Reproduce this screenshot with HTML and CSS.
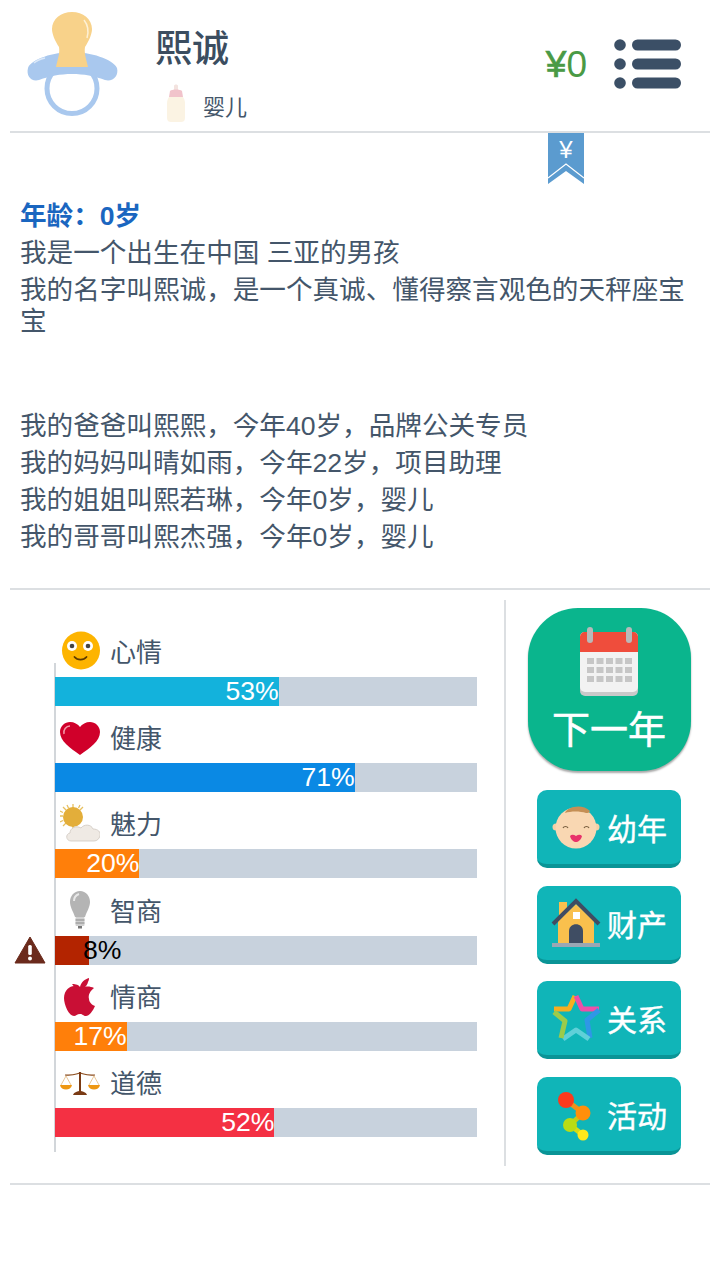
FILE: index.html
```html
<!DOCTYPE html>
<html lang="zh-CN">
<head>
  <meta charset="UTF-8">
  <meta name="viewport" content="width=device-width, initial-scale=1.0">
  <title>熙诚</title>
  <link rel="stylesheet" href="styles.css">
</head>
<body>
  <header class="top">
    <svg class="avatar" viewBox="0 0 120 120">
      <circle cx="63" cy="82.500" r="25" fill="none" stroke="#a9c8ee" stroke-width="5"/>
      <path d="M19 62C22 53 45 46 63 46S104 53 108 62C110 70 104 76 96 74 85 70 75 68 63 68S41 70 30 74C22 76 17 70 19 62z" fill="#a9c8ee"/>
      <path d="M25 57c3-3 7-4 11-5" stroke="#dbe8f8" stroke-width="1.500" fill="none"/>
      <path d="M47 61c2-9 4-14 3-20-4-6-7-13-7-18 0-10 9-17 20-17s20 7 20 17c0 5-3 12-7 18-1 6 1 11 3 20z" fill="#f8d28a"/>
      <path d="M75 14c4 5 5 11 3 18" stroke="#fdf0d5" stroke-width="1.500" fill="none"/>
    </svg>
    <div class="who">
      <div class="name">熙诚</div>
      <div class="stage">
        <svg class="bottle" viewBox="0 0 20 40">
          <path d="M8 3c0-2 4-2 4 0v4H8z" fill="#f3e3df"/>
          <path d="M4 8c2-2 10-2 12 0l1 6H3z" fill="#f1c3cb"/>
          <path d="M3 14h14c2 3 2 5 2 8v13c0 3-2 4-4 4H5c-2 0-4-1-4-4V22c0-3 0-5 2-8z" fill="#fbf3e3"/>
        </svg>
        <span>婴儿</span>
      </div>
    </div>
    <div class="money"><span class="yen">¥</span>0</div>
    <svg class="menu" viewBox="0 0 68 50">
      <circle cx="6" cy="6" r="5.800"/><circle cx="6" cy="25" r="5.800"/><circle cx="6" cy="44" r="5.800"/>
      <rect x="18" y="0.500" width="49" height="11" rx="5.500"/><rect x="18" y="19.500" width="49" height="11" rx="5.500"/><rect x="18" y="38.500" width="49" height="11" rx="5.500"/>
    </svg>
  </header>

  <section class="story">
    <div class="ribbon">
      <svg viewBox="0 0 36 51">
        <path d="M0 0h36v51L18 38 0 51z" fill="#5b9bcf"/>
        <path d="M0 45l18-14 18 14" fill="none" stroke="#fff" stroke-width="1.200"/>
        <text x="18" y="25" text-anchor="middle" class="ribbon-yen">¥</text>
      </svg>
    </div>
    <p class="age">年龄：0岁</p>
    <p>我是一个出生在中国 三亚的男孩</p>
    <p>我的名字叫熙诚，是一个真诚、懂得察言观色的天秤座宝宝</p>
    <div class="gap"></div>
    <p>我的爸爸叫熙熙，今年40岁，品牌公关专员</p>
    <p>我的妈妈叫晴如雨，今年22岁，项目助理</p>
    <p>我的姐姐叫熙若琳，今年0岁，婴儿</p>
    <p>我的哥哥叫熙杰强，今年0岁，婴儿</p>
  </section>

  <section class="panel">
    <div class="stats">
      <div class="stat">
        <div class="stat-label">
          <svg class="stat-icon" viewBox="-1.500 0 40 40">
            <circle cx="19.500" cy="19.500" r="19" fill="#fdb400"/>
            <circle cx="10.500" cy="15" r="5" fill="#fff"/><circle cx="26.500" cy="15" r="5" fill="#fff"/>
            <circle cx="10.500" cy="15" r="2.300" fill="#444"/><circle cx="26.500" cy="15" r="2.300" fill="#444"/>
            <path d="M13 26c3 3.500 9 3.500 12 0" fill="none" stroke="#5b3a00" stroke-width="1.800" stroke-linecap="round"/>
          </svg>
          <span>心情</span>
        </div>
        <div class="track"><div class="fill" style="width:53%;background:#13b2dc">53%</div></div>
      </div>
      <div class="stat">
        <div class="stat-label">
          <svg class="stat-icon" viewBox="0 -5 40 40">
            <path d="M20 33C10 26 0 19 0 10 0 4 5 0 10 0c4 0 8 2 10 5 2-3 6-5 10-5 5 0 10 4 10 10 0 9-10 16-20 23z" fill="#d0002a"/>
            <path d="M4 12c-1-4 2-8 6-8" fill="none" stroke="#f59aa8" stroke-width="1.500"/>
          </svg>
          <span>健康</span>
        </div>
        <div class="track"><div class="fill" style="width:71%;background:#0a89e4">71%</div></div>
      </div>
      <div class="stat">
        <div class="stat-label">
          <svg class="stat-icon" viewBox="0 0 40 40">
            <g stroke="#e6c060" stroke-width="1.300">
              <path d="M13 0v4M13 22v4M0 12h3M3 3l3 3M23 3l-3 3M3 22l3-3M7 1l1.500 3M20 1l-1.500 3M0 7l3 1.500M0 18l3-1.500"/>
            </g>
            <circle cx="13" cy="13" r="10" fill="#e3ae3a"/>
            <path d="M11 37c-5 0-6-7-1-8 0-5 6-8 11-5 3-4 10-4 12 1 5 0 8 3 7 7-1 3-3 5-6 5z" fill="#efeae4" stroke="#cfc8c0" stroke-width="0.800"/>
          </svg>
          <span>魅力</span>
        </div>
        <div class="track"><div class="fill" style="width:20%;background:#ff7f0a">20%</div></div>
      </div>
      <div class="stat">
        <div class="stat-label">
          <svg class="stat-icon" viewBox="0 0 40 38">
            <path d="M20 0c6 0 10 5 10 11 0 5-3 9-5 15H15c-2-6-5-10-5-15C10 5 14 0 20 0z" fill="#b4b4b4"/>
            <path d="M14 10c0-3 2-6 5-7" stroke="#e8e8e8" stroke-width="2" fill="none"/>
            <rect x="15.500" y="26" width="9" height="9" rx="1" fill="#d0d0d0"/>
            <path d="M15.500 29h9M15.500 32h9" stroke="#8a8a8a"/>
            <rect x="18" y="35" width="4" height="2.500" fill="#777"/>
          </svg>
          <span>智商</span>
        </div>
        <div class="track">
          <svg class="warn" viewBox="0 0 32 28">
            <path d="M16 1L31 27H1z" fill="#6b2a1c" stroke="#6b2a1c" stroke-linejoin="round"/>
            <rect x="14.200" y="9" width="3.600" height="10" rx="1.500" fill="#fff"/>
            <circle cx="16" cy="22.500" r="2" fill="#fff"/>
          </svg>
          <div class="fill fill-low" style="width:8%;background:#b32400"><span>8%</span></div>
        </div>
      </div>
      <div class="stat">
        <div class="stat-label">
          <svg class="stat-icon" viewBox="-2 -1 40 40">
            <path d="M18 10c-2-3-6-3-8-3 2 3 4 5 8 5 4 0 7-3 8-7 1-2 1-3 1-4-4 1-8 4-9 9z" fill="#c90f35"/>
            <path d="M20 11c3-2 8-2 12 0-4 3-6 7-5 11 0 3 3 6 6 7-2 5-6 10-9 10-3 0-3-2-6-2s-4 2-6 2c-5 0-10-11-10-18C2 13 8 9 12 9c3 0 5 1 8 2z" fill="#c90f35"/>
          </svg>
          <span>情商</span>
        </div>
        <div class="track"><div class="fill" style="width:17%;background:#ff7f0a">17%</div></div>
      </div>
      <div class="stat">
        <div class="stat-label">
          <svg class="stat-icon" viewBox="0 0 40 26">
            <path d="M5 5c8 1 11-1 15-2 4 1 7 3 15 2" fill="none" stroke="#8a4a1a" stroke-width="1.200"/>
            <path d="M20 2v20" stroke="#7a3a14" stroke-width="2"/>
            <path d="M13 25c1-3 5-4 7-4s6 1 7 4z" fill="#7a3a14"/>
            <path d="M0 15h12c-1 6-11 6-12 0zM28 15h12c-1 6-11 6-12 0z" fill="#ee9712"/>
            <path d="M6 6L1 15M6 6l5 9M34 6l-5 9M34 6l5 9" stroke="#d8a050" stroke-width="0.600" fill="none"/>
          </svg>
          <span>道德</span>
        </div>
        <div class="track"><div class="fill" style="width:52%;background:#f43043">52%</div></div>
      </div>
    </div>

    <div class="actions">
      <button class="btn-next">
        <svg class="calendar" viewBox="0 0 58 70">
          <rect y="6" width="58" height="64" rx="5" fill="#c9c9c9"/>
          <rect y="6" width="58" height="60" rx="5" fill="#f2f2f2"/>
          <path d="M0 26V11c0-3 2-5 5-5h48c3 0 5 2 5 5v15z" fill="#ef4d3c"/>
          <rect x="7" y="1" width="6" height="16" rx="3" fill="#b9b9b9"/>
          <rect x="46" y="1" width="6" height="16" rx="3" fill="#b9b9b9"/>
          <path d="M7 35h45M7 44h45M7 53h45" stroke="#c6c6c6" stroke-width="6" stroke-dasharray="7 2.500"/>
        </svg>
        <span>下一年</span>
      </button>
      <button class="btn">
        <svg class="btn-icon" viewBox="0 0 48 44">
          <circle cx="4" cy="22" r="3.500" fill="#f5cfa5"/><circle cx="44" cy="22" r="3.500" fill="#f5cfa5"/>
          <circle cx="24" cy="23" r="20.500" fill="#f9d7b2"/>
          <path d="M13 8c2-6 17-10 25-2-1 2-2 2-4 2-6-2-15-2-21 0z" fill="#c58f55"/>
          <path d="M11 23c1-2 4-2 5 0M32 23c1-2 4-2 5 0" fill="none" stroke="#7a6040" stroke-width="1.200"/>
          <path d="M18 31c2-2 4-1 6 0 2-1 4-2 6 0-1 4-4 6-6 6s-5-2-6-6z" fill="#e8326a"/>
        </svg>
        <span>幼年</span>
      </button>
      <button class="btn">
        <svg class="btn-icon" viewBox="0 0 48 48">
          <path d="M7 3h8v15H7z" fill="#f9c04d"/>
          <path d="M6 22L24 5l18 17v22H6z" fill="#f9c04d"/>
          <path d="M1 25L24 2l23 23" fill="none" stroke="#3f4d63" stroke-width="4"/>
          <path d="M17 44V32c0-9 14-9 14 0v12z" fill="#3f4d63"/>
          <rect x="21" y="13" width="7" height="7" fill="#fff"/>
          <rect y="44" width="48" height="4" fill="#9aa7b4"/>
        </svg>
        <span>财产</span>
      </button>
      <button class="btn">
        <svg class="btn-icon" viewBox="0 0 48 48" fill="none" stroke-width="5" stroke-linejoin="round">
          <path d="M2 15h15l6-13" stroke="#f7ae20"/>
          <path d="M24 2l6 13h17" stroke="#ee4fa8"/>
          <path d="M47 16L35 26l3 18" stroke="#2f97e6"/>
          <path d="M37 45l-13-9-13 9" stroke="#5fd0d8"/>
          <path d="M9 44l4-17L2 18" stroke="#9ccb4a"/>
        </svg>
        <span>关系</span>
      </button>
      <button class="btn">
        <svg class="btn-icon" viewBox="0 0 48 48">
          <path d="M14 10l17 13" stroke="#f0901a" stroke-width="5"/>
          <path d="M31 23L18 35" stroke="#c8c814" stroke-width="5"/>
          <path d="M18 35l13 10" stroke="#d4dc14" stroke-width="5"/>
          <circle cx="31" cy="23" r="7.500" fill="#ff8f0a"/>
          <circle cx="18" cy="35" r="7" fill="#b8dc14"/>
          <circle cx="31" cy="45" r="5.500" fill="#ffe81a"/>
          <circle cx="14" cy="10" r="8" fill="#fc3a1c"/>
        </svg>
        <span>活动</span>
      </button>
    </div>
  </section>
</body>
</html>
```

FILE: styles.css
```css
* {
  box-sizing: border-box;
}

body {
  margin: 0;
  background: #fff;
  color: #44566a;
  font-family: "Liberation Sans", "Noto Sans CJK SC", sans-serif;
}

.top {
  display: flex;
  align-items: center;
  height: 133px;
  margin: 0 10px;
  border-bottom: 2px solid #dcdfe2;
}

.avatar {
  width: 120px;
  height: 120px;
  margin: 0 0 0 -1px;
  flex: none;
}

.who {
  align-self: flex-start;
  margin-left: 26px;
  padding-top: 25px;
  flex: 1;
}

.name {
  font-size: 37px;
  line-height: 50px;
  font-weight: 500;
  color: #3b4d60;
}

.stage {
  display: flex;
  align-items: center;
  margin: 13px 0 0 11px;
  font-size: 22px;
  line-height: 40px;
}

.bottle {
  width: 20px;
  height: 40px;
  margin: -10px 17px 0 0;
}

.money {
  margin: -2px 27px 0 0;
  font-size: 37px;
  color: #4a9a45;
}

.yen {
  -webkit-text-stroke: 0.7px #4a9a45;
}

.menu {
  width: 68px;
  height: 50px;
  margin: -4px 28px 0 0;
  fill: #3b4f66;
}

.story {
  position: relative;
  height: 457px;
  margin: 0 10px;
  padding: 68px 8px 0 10px;
  border-bottom: 2px solid #dcdfe2;
  font-size: 26.600px;
}

.story p {
  margin: 0 0 6px;
  line-height: 31px;
}

.story .age {
  font-weight: 700;
  color: #1a66c0;
}

.gap {
  height: 68px;
}

.ribbon {
  position: absolute;
  left: 538px;
  top: 0;
  width: 36px;
  height: 51px;
}

.ribbon-yen {
  font-size: 24px;
  fill: #fff;
}

.panel {
  display: flex;
  margin: 0 10px;
  padding-top: 10px;
  height: 595px;
  border-bottom: 2px solid #dcdfe2;
}

.stats {
  position: relative;
  width: 496px;
  height: 566px;
  padding: 19.500px 0 0 45px;
  border-right: 2px solid #dcdfe2;
}

.stats::before {
  content: "";
  position: absolute;
  left: 44px;
  top: 63px;
  bottom: 14px;
  width: 2px;
  background: #d2d6da;
}

.stat {
  height: 86.300px;
}

.stat-label {
  display: flex;
  align-items: center;
  height: 57.300px;
  padding: 6px 0 0 5px;
  font-size: 26px;
}

.stat-label span {
  margin-top: -2px;
}

.stat-icon {
  width: 40px;
  height: 40px;
  margin-right: 10px;
  flex: none;
}

.track {
  position: relative;
  width: 422px;
  height: 29px;
  background: #c8d2dd;
}

.fill {
  height: 100%;
  color: #fff;
  font-size: 26.600px;
  line-height: 29px;
  text-align: right;
  white-space: nowrap;
}

.fill-low {
  color: #000;
  text-align: left;
}

.fill-low span {
  margin-left: 28px;
}

.warn {
  position: absolute;
  left: -41px;
  top: 0;
  width: 32px;
  height: 28px;
}

.actions {
  display: flex;
  flex-direction: column;
  align-items: center;
  flex: 1;
  padding: 8px 0 0 2px;
}

button {
  border: none;
  color: #fff;
  font-family: inherit;
  padding: 0;
}

.btn-next {
  display: flex;
  flex-direction: column;
  align-items: center;
  width: 163px;
  height: 163px;
  margin-bottom: 19px;
  padding-top: 18px;
  border-radius: 50px;
  background: #0ab58d;
  box-shadow: 0 2px 2px #a9a9a9;
  font-size: 38px;
  line-height: 48px;
  -webkit-text-stroke: 0.5px #fff;
}

.calendar {
  width: 58px;
  height: 70px;
  margin-bottom: 10px;
}

.btn {
  display: flex;
  align-items: center;
  width: 144px;
  height: 78px;
  margin-bottom: 17.700px;
  padding-left: 15px;
  border-radius: 10px;
  border-bottom: 4px solid #0a9496;
  background: #10b5b8;
  font-size: 30px;
  -webkit-text-stroke: 0.4px #fff;
}

.btn-icon {
  width: 48px;
  height: 48px;
  margin-right: 7px;
  flex: none;
  overflow: visible;
}
```
